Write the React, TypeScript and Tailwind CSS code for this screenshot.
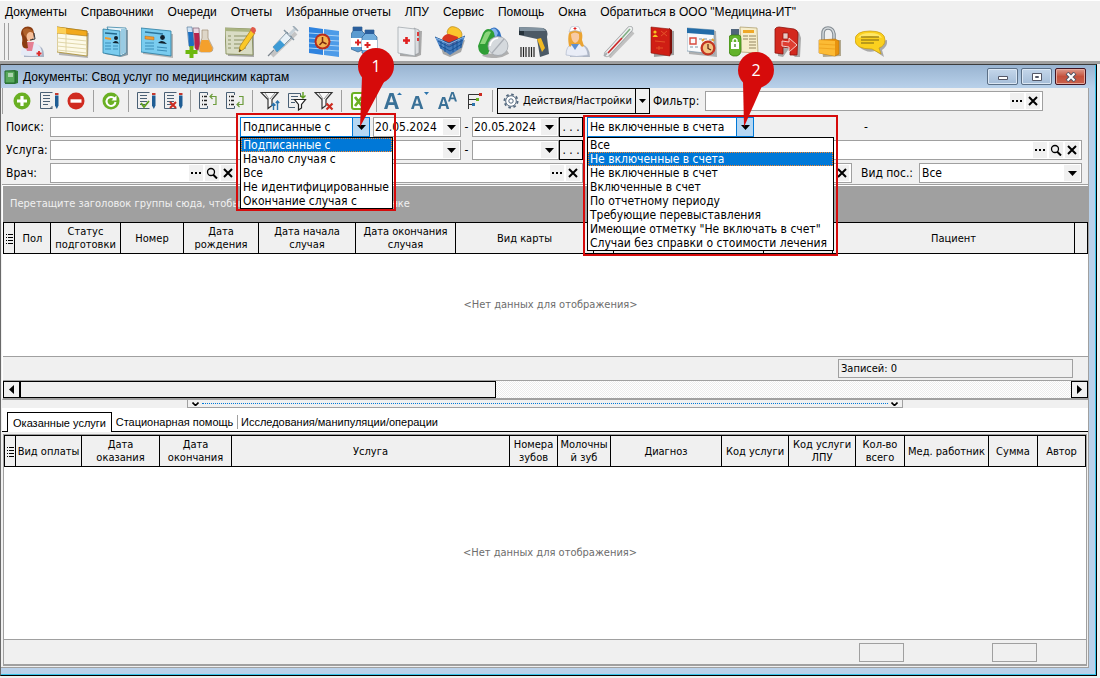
import React from 'react';

const MENU = [
  'Документы',
  'Справочники',
  'Очереди',
  'Отчеты',
  'Избранные отчеты',
  'ЛПУ',
  'Сервис',
  'Помощь',
  'Окна',
  'Обратиться в ООО "Медицина-ИТ"',
];

const DATE_KINDS = ['Подписанные с', 'Начало случая с', 'Все', 'Не идентифицированные', 'Окончание случая с'];

const BILL_KINDS = [
  'Все',
  'Не включенные в счета',
  'Не включенные в счет',
  'Включенные в счет',
  'По отчетному периоду',
  'Требующие перевыставления',
  'Имеющие отметку "Не включать в счет"',
  'Случаи без справки о стоимости лечения',
];

interface Column {
  label: string;
  width: string;
}

const CARD_COLUMNS: Column[] = [
  { label: 'Пол', width: 'w-[36px]' },
  { label: 'Статус подготовки', width: 'w-[70px]' },
  { label: 'Номер', width: 'w-[63px]' },
  { label: 'Дата рождения', width: 'w-[75px]' },
  { label: 'Дата начала случая', width: 'w-[97px]' },
  { label: 'Дата окончания случая', width: 'w-[100px]' },
  { label: 'Вид карты', width: 'w-[138px]' },
  { label: '', width: 'w-[20px]' },
  { label: '', width: 'w-[150px]' },
  { label: '', width: 'w-[69px]' },
  { label: 'Пациент', width: '' },
  { label: '', width: 'w-[13px]' },
];

const SERVICE_COLUMNS: Column[] = [
  { label: 'Вид оплаты', width: 'w-[66px]' },
  { label: 'Дата оказания', width: 'w-[78px]' },
  { label: 'Дата окончания', width: 'w-[72px]' },
  { label: 'Услуга', width: '' },
  { label: 'Номера зубов', width: 'w-[48px]' },
  { label: 'Молочный зуб', width: 'w-[53px]' },
  { label: 'Диагноз', width: 'w-[111px]' },
  { label: 'Код услуги', width: 'w-[67px]' },
  { label: 'Код услуги ЛПУ', width: 'w-[67px]' },
  { label: 'Кол-во всего', width: 'w-[49px]' },
  { label: 'Мед. работник', width: 'w-[84px]' },
  { label: 'Сумма', width: 'w-[49px]' },
  { label: 'Автор', width: 'w-[48px]' },
];

/* ---------- main toolbar art, 32x32 ---------- */

const OperatorArt = () => (
  <>
    <path d="M9 31 Q8 20 13 18 L20 18 Q29 20 29 29 L29 31Z" fill="#a9b3c4" />
    <path d="M6 29 Q6 19 12 17 L20 17 Q27 19 27 29 Q16 31 6 29Z" fill="#e6ebf6" />
    <path d="M9 16 L19 16 L17 25 L12 25Z" fill="#e57f93" />
    <path d="M10 1 Q18 -1 19 7 L18 14 L12 15 L13 22 Q7 24 7 17 Q8 12 6 8 Q6 3 10 1Z" fill="#8b3d12" />
    <path d="M11 6 Q14 3 18 6 L18 12 Q16 16 13 15 Q11 12 11 6Z" fill="#f6c09a" />
    <path d="M8 4 Q12 0 18 5 L18 7 Q13 4 11 11 Q8 9 8 4Z" fill="#b0622a" />
    <path d="M19 7 L20 13 L15 14" fill="none" stroke="#333" strokeWidth="1" />
    <path d="M24 25v5M21.500 27.500h5" stroke="#dd2a2a" strokeWidth="1.800" />
  </>
);

const TableArt = () => (
  <>
    <path d="M3 4 L32 7 L31 32 L2 29Z" fill="#b5b5b5" />
    <path d="M0 1 L30 5 L30 30 L0 26Z" fill="#fdfae8" stroke="#a98b2a" strokeWidth=".8" />
    <path d="M0 1 L30 5 L30 10 L0 7Z" fill="#f2a91c" stroke="#a4700d" strokeWidth=".6" />
    <path d="M0 1 L9 2.200 L9 8 L0 7Z" fill="#fbcf56" />
    <path d="M0 12 L30 15 M0 16 L30 19 M0 20 L30 23 M0 24 L30 27 M9 7.500 V27" stroke="#dcd2a3" strokeWidth=".9" />
  </>
);

const PersonCard = () => (
  <>
    <path d="M4 10 L13 11 L13 14 L4 13Z" fill="#f39a2c" stroke="#a65a10" strokeWidth=".4" />
    <circle cx="21.500" cy="11.500" r="2.400" fill="#10202c" />
    <path d="M17 17 Q21 12.500 26 18Z" fill="#10202c" />
    <path d="M4 17h9M4 20h9M4 23h9M16 21l10 1M16 24l10 1" stroke="#3b8db8" strokeWidth="1" />
    <path d="M4 6 L22 8" stroke="#2b759b" strokeWidth="1.500" />
  </>
);

const CardsArt = () => (
  <>
    <path d="M8 2 L29 4 L29 29 L22 31 L6 28Z" fill="#8b9ca6" />
    <path d="M8 1 L27 2 L27 27 L21 30Z" fill="#e8f4fa" stroke="#3c86a8" strokeWidth=".8" />
    <path d="M23 3v25M25 3v24" stroke="#4ba3cc" strokeWidth="1" />
    <path d="M4 3 L21 5 L21 30 L4 27Z" fill="#7accef" stroke="#2a7ba0" strokeWidth=".8" />
    <path d="M6 11 L12 12 L12 14 L6 13Z" fill="#f39a2c" />
    <path d="M6 17h6M6 20h6M6 23h6M14 20h5M14 23h5" stroke="#3b8db8" />
    <path d="M6 7l12 1" stroke="#23688c" strokeWidth="1.500" />
    <circle cx="17" cy="12" r="2" fill="#10202c" />
    <path d="M13.500 17 Q17 13 20 17.500Z" fill="#10202c" />
  </>
);

const CardArt = () => (
  <>
    <path d="M2 5 L32 8 L32 32 L2 28Z" fill="#b4b4b4" />
    <path d="M0 2 L30 5 L30 30 L0 26Z" fill="#7accef" stroke="#2a7ba0" strokeWidth=".8" />
    <PersonCard />
  </>
);

const TubesArt = () => (
  <>
    <path d="M4 1h5l2 18q-2 4-5 1z" fill="#cfe3f5" stroke="#5d7f9d" strokeWidth=".7" />
    <path d="M5 6h5l1 13q-2 4-5 1z" fill="#1d6fc0" />
    <path d="M10 2h6l1 20q-3 4-5 0z" fill="#ead7e2" stroke="#7a5b70" strokeWidth=".7" />
    <path d="M11 7h5l1 15q-3 4-5 0z" fill="#b8234d" />
    <path d="M19 4h6v8l5 10q0 4-3 4h-9q-3 0-2-4l3-10z" fill="#ded6c8" stroke="#a08d72" strokeWidth=".7" />
    <path d="M18.500 14h7l4 8q0 4-3 4h-8q-2 0-2-4z" fill="#f4a02c" />
    <path d="M6.500 20h4v4h4v4h-4v4h-4v-4h-4v-4h4z" fill="#6cb80e" />
  </>
);

const NoteArt = () => (
  <>
    <path d="M2 3h27v28L3 30z" fill="#a8a8a8" />
    <path d="M0 2 L27 3 L28 29 L1 28Z" fill="#d9dcc4" stroke="#87905c" strokeWidth=".9" />
    <path d="M0 2 L27 3 L27 6 L0 5Z" fill="#a9b381" />
    <path d="M9 10h13M9 14h13M9 18h9M9 22h12M3 10h3M3 14h3M3 18h3M3 22h3" stroke="#8b9265" />
    <path d="M14 26 L15 20 L26 4 L30 7 L19 23Z" fill="#fbc827" stroke="#a97b11" strokeWidth=".7" />
    <path d="M25 4 L27 1 Q31 1 31 5 L29 8Z" fill="#e05a4a" />
    <path d="M14 26 L14.600 23 L16.500 24.500Z" fill="#333" />
  </>
);

const SyringeArt = () => (
  <>
    <path d="M5 30 L29 7" stroke="#c4c4c4" strokeWidth="4" />
    <path d="M1 30 L7 24" stroke="#7b858e" strokeWidth="1.200" />
    <path d="M6 21 L20 6 L25 11 L10 26Z" fill="#e8f1f7" stroke="#6f8797" strokeWidth=".8" />
    <path d="M6 21 L13 14 L18 19 L10 26Z" fill="#3d9bd6" />
    <path d="M17 4 L27 14" stroke="#8496a3" strokeWidth="1.500" />
    <path d="M22 9 L29 2" stroke="#c7d1d8" strokeWidth="3" />
    <path d="M26 0 L31 5" stroke="#9caab4" strokeWidth="1.600" />
  </>
);

const SafeArt = () => (
  <>
    <path d="M0 1 L14 3 L14 29 L0 27Z" fill="#2f83df" />
    <path d="M15 3 L30 5 L30 31 L15 29Z" fill="#4d9be8" />
    <path d="M0 7l14 1M0 12l14 1M0 17l14 1M0 22l14 1M15 9l15 1M15 14l15 1M15 19l15 1M15 24l15 1" stroke="#a9d3f7" />
    <circle cx="13.500" cy="15.500" r="8" fill="#b92c1c" />
    <circle cx="13.500" cy="15.500" r="6" fill="#f4b250" />
    <path d="M13.500 11v5l-3 3M13.500 16l4 2" stroke="#7b2a10" strokeWidth="1.500" fill="none" />
  </>
);

const VialsArt = () => (
  <>
    <path d="M14 24 L26 28 L20 31 L12 28Z" fill="#b3b3b3" />
    <path d="M2 1h9v4l3 3v15l-7 3-7-3V8l2-3z" fill="#5c9bd0" stroke="#2f5f8e" strokeWidth=".7" />
    <path d="M2 1h9v4H2z" fill="#2b5f9c" />
    <path d="M0 12h14v9H0z" fill="#fff" />
    <path d="M14 4h9v4l3 3v16l-8 3-7-3V11l3-3z" fill="#72aedd" stroke="#2f5f8e" strokeWidth=".7" />
    <path d="M14 4h9v4h-9z" fill="#2b5f9c" />
    <path d="M11 14h15v10H11z" fill="#fff" />
    <path d="M16.500 16v6M13.500 19h6M7 13.500v6M4 16.500h6" stroke="#dc2323" strokeWidth="2" />
  </>
);

const HistoryArt = () => (
  <>
    <path d="M7 4 L29 5 L28 29 L23 31 L7 30Z" fill="#a9a9a9" />
    <path d="M21 2 L26 4 L26 27 L22 29Z" fill="#d9dcdf" stroke="#8b8f93" strokeWidth=".6" />
    <path d="M24 6h2v4h-2zM24 12h2v3h-2z" fill="#de3838" />
    <path d="M5 1 L22 3 L22 30 L5 27Z" fill="#eef0f2" stroke="#9aa0a6" strokeWidth=".7" />
    <path d="M13.500 11v7M10 14.500h7" stroke="#e02020" strokeWidth="2.600" />
  </>
);

const BasketArt = () => (
  <>
    <path d="M6 22 L30 14 L26 26 L15 31 L8 28Z" fill="#a6a6a6" />
    <path d="M12 6 Q14 -1 20 1 Q26 3 27 8 Q27 14 22 14 L14 12Z" fill="#fbc52d" stroke="#ac7d12" strokeWidth=".6" />
    <path d="M7 13 Q9 8 14 8 L23 11 L22 18 L13 20Z" fill="#d7361f" />
    <path d="M0 11 L14 17 L30 10 L26 22 L15 29 L5 22Z" fill="#2b6fc1" fillOpacity=".8" />
    <path d="M0 11l14 6 16-7M3 15l11 6 14-7M4 19l11 6 12-7M6 14v9M10 16v10M18 16v10M22 14v10M26 12v10" stroke="#164f92" strokeWidth=".9" fill="none" />
    <path d="M1 12l13 6 15-7" stroke="#9cc8f2" strokeWidth=".8" fill="none" />
  </>
);

const PillsArt = () => (
  <>
    <path d="M6 28 Q20 33 31 26" stroke="#b0b0b0" strokeWidth="4" fill="none" />
    <path d="M12 4 Q18 -2 23 6 L26 16 Q20 24 14 18Z" fill="#2f6fc0" />
    <path d="M14 4 Q18 0 21 7 L19 12Z" fill="#86b5ec" />
    <path d="M1 20 L6 7 Q10 0 16 5 Q19 9 16 15 L11 28 Q2 31 1 20Z" fill="#2f9e35" />
    <path d="M3 18 L8 7 Q11 4 14 6 L8 18Z" fill="#8bd57b" />
    <ellipse cx="21" cy="20" rx="10" ry="9.500" fill="#d5d9dd" stroke="#9a9fa6" strokeWidth=".7" />
    <path d="M15 27 L27 13" stroke="#a9aeb5" strokeWidth="1.200" />
    <path d="M13 20 Q14 13 21 12" stroke="#fff" strokeWidth="1.600" fill="none" />
  </>
);

const ScannerArt = () => (
  <>
    <path d="M0 1 L24 2 Q30 4 28 11 L30 28 L21 31 L18 13 L0 9Z" fill="#4b5965" />
    <path d="M0 1 L24 2 L27 5 L1 5Z" fill="#8293a0" />
    <path d="M0 5 h5 v4 h-5z" fill="#26323b" />
    <path d="M18 13 L22 12 L26 22 L23 26Z" fill="#f1b922" />
    <path d="M2 21v10M4.500 21v10M7 21v10M10 21v10M12.500 21v10M15 21v10" stroke="#222" strokeWidth="1.200" />
  </>
);

const NurseArt = () => (
  <>
    <path d="M9 31 Q8 20 14 18 L20 18 Q29 20 29 31Z" fill="#aeb6c4" />
    <path d="M5 29 Q5 20 11 18 L19 18 Q26 20 27 29 Q15 32 5 29Z" fill="#e9edf7" stroke="#a7b1c6" strokeWidth=".6" />
    <path d="M8 20 Q5 4 14 2 Q23 3 21 14 L23 20 Q20 22 19 18 L11 18 Q10 22 8 20Z" fill="#eba432" />
    <path d="M10 8 Q14 5 18 8 Q19 16 14 17 Q10 15 10 8Z" fill="#f8cba5" />
    <path d="M8 6 L10 1 Q14 -1 18 1 L20 6 Q14 3 8 6Z" fill="#fff" stroke="#a9b4c8" strokeWidth=".6" />
    <path d="M14 1v3M12.500 2.500h3" stroke="#dd2020" />
    <path d="M10 18 L14 24 L18 18Z" fill="#5e8fd0" />
  </>
);

const ThermometerArt = () => (
  <>
    <path d="M6 31 L30 6" stroke="#c0c0c0" strokeWidth="4" />
    <path d="M4 28 L27 3" stroke="#9da1a3" strokeWidth="6" strokeLinecap="round" />
    <path d="M4 28 L27 3" stroke="#eef0f0" strokeWidth="4.600" strokeLinecap="round" />
    <path d="M5 27 L19 12" stroke="#cc2a2a" strokeWidth="1.800" />
    <path d="M19 12 L27 3" stroke="#7fae83" strokeWidth="1.600" />
    <path d="M1 30 L4 27" stroke="#a8adb0" strokeWidth="2" />
  </>
);

const PassportArt = () => (
  <>
    <path d="M8 3 L29 5 L29 29 L9 31Z" fill="#9f9f9f" />
    <path d="M24 2 L27 4 L27 27 L24 30Z" fill="#7a0f09" />
    <path d="M6 1 L25 3 L25 30 L6 27Z" fill="#cf1e14" stroke="#8a130b" strokeWidth=".6" />
    <circle cx="10" cy="6" r="1.600" fill="#f5c522" />
    <path d="M7.500 11 Q10 6 13 11Z" fill="#f5c522" />
    <path d="M16 5l6 5M22 5l-6 5M10 15l10 1M14 20v4M11 22h7" stroke="#e5582a" strokeWidth=".9" />
  </>
);

const ScheduleArt = () => (
  <>
    <path d="M2 3 L29 5 L30 31 L2 28Z" fill="#b0b0b0" />
    <path d="M0 2 L27 4 L27 28 L0 25Z" fill="#f8fafc" stroke="#7895aa" strokeWidth=".7" />
    <path d="M0 2 L27 4 L27 9 L0 7Z" fill="#236ca8" />
    <path d="M3 12h6v6H3z" fill="none" stroke="#d84a3e" strokeWidth="1.400" />
    <path d="M12 13h3M17 13h3M22 14h3M3 21h3M8 21h3" stroke="#b9c6cf" strokeWidth="2" />
    <circle cx="21" cy="22" r="7.500" fill="#c33522" />
    <circle cx="21" cy="22" r="5.200" fill="#f3c483" />
    <path d="M21 18v4.500l3 1.500" stroke="#5d2412" strokeWidth="1.200" fill="none" />
    <path d="M15 15l2-2M27 15l-2-2" stroke="#e2a02a" strokeWidth="2" />
  </>
);

const KeyDocArt = () => (
  <>
    <path d="M11 1 L28 2 L29 27 L12 26Z" fill="#f6edcb" stroke="#a69763" strokeWidth=".7" />
    <path d="M14 4h11v3H14z" fill="#efa827" />
    <path d="M14 10h5M14 13h5M20 10h7M20 13h7M20 16h7M20 19h7M20 22h7" stroke="#938661" strokeWidth="1.200" />
    <path d="M2 3h8v7H2z" fill="#51667b" />
    <path d="M0 12 Q0 9 3 9h7q2 0 2 4v11q0 5-4 6H4q-4-1-4-5z" fill="#62b32a" stroke="#367a10" strokeWidth=".7" />
    <path d="M2 16h8v7H2z" fill="#fff" />
    <path d="M4 16v-2q2-3 4 0v2" stroke="#fff" strokeWidth="1.400" fill="none" />
    <path d="M6 18v3" stroke="#367a10" strokeWidth="1.200" />
  </>
);

const AccountArt = () => (
  <>
    <path d="M6 4 L28 6 L30 12 L29 31 L24 31 L17 24 L12 31 L7 30Z" fill="#aaa" />
    <path d="M4 3 Q5 1 8 1 L23 3 Q27 4 27 8 L26 29 L19 29 L19 22 L12 21 L12 28 L4 27Z" fill="#d3291e" stroke="#8d130c" strokeWidth=".8" />
    <path d="M12 7 L17 7 L17 13 L12 13Z" fill="#e8c9c5" stroke="#8d130c" strokeWidth=".7" />
    <path d="M11 15 L18 16 L18 12 L26 19 L18 26 L18 21 L11 20Z" fill="#df3d31" stroke="#f6dedb" strokeWidth=".9" />
  </>
);

const LockArt = () => (
  <>
    <path d="M8 14h20v16L10 31z" fill="#b1a88f" />
    <path d="M10 15V8Q10 2 15 2t6 6v6" fill="none" stroke="#838b92" strokeWidth="3.600" />
    <path d="M10 15V8Q10 2 15 2t6 6v6" fill="none" stroke="#d5dadd" strokeWidth="1.400" />
    <path d="M6 14 L22 13 L26 15 L26 28 L22 30 L6 27Z" fill="#e8930f" stroke="#b47109" strokeWidth=".6" />
    <path d="M6 14 L22 15 L22 30 L6 27Z" fill="#fcbb35" />
    <path d="M6 18l16 1M6 22l16 1" stroke="#f0a620" />
  </>
);

const ChatArt = () => (
  <>
    <path d="M3 20 Q12 28 20 25 L29 31 L27 24 Q33 20 32 14Z" fill="#a9a9a9" />
    <path d="M15 5 Q30 5 30 14 Q30 20 24 22 L26 28 L17 23 Q0 23 0 14 Q0 5 15 5Z" fill="#fbd01f" stroke="#c79b0d" strokeWidth=".7" />
    <path d="M3 12 Q5 7 15 7 Q25 7 27 12 Q16 8 3 12Z" fill="#ffe765" />
    <path d="M6 11h18M6 14h18M6 17h13" stroke="#7a6416" strokeWidth="1.200" />
  </>
);

const MAIN_TOOLS: { title: string; Art: React.FC }[] = [
  { title: 'Регистратура', Art: OperatorArt },
  { title: 'Расписание', Art: TableArt },
  { title: 'Картотека', Art: CardsArt },
  { title: 'Карта пациента', Art: CardArt },
  { title: 'Лаборатория', Art: TubesArt },
  { title: 'Записи', Art: NoteArt },
  { title: 'Прививки', Art: SyringeArt },
  { title: 'Архив', Art: SafeArt },
  { title: 'Медикаменты', Art: VialsArt },
  { title: 'История болезни', Art: HistoryArt },
  { title: 'Аптека', Art: BasketArt },
  { title: 'Лекарства', Art: PillsArt },
  { title: 'Сканер', Art: ScannerArt },
  { title: 'Медсестра', Art: NurseArt },
  { title: 'Температура', Art: ThermometerArt },
  { title: 'Паспорт', Art: PassportArt },
  { title: 'График', Art: ScheduleArt },
  { title: 'Подпись', Art: KeyDocArt },
  { title: 'Выход', Art: AccountArt },
  { title: 'Блокировка', Art: LockArt },
  { title: 'Сообщения', Art: ChatArt },
];

/* ---------- document toolbar art, 20x20 ---------- */

const AddArt = () => (
  <>
    <circle cx="10" cy="10" r="8.500" fill="#6ab023" />
    <path d="M10 5v10M5 10h10" stroke="#fff" strokeWidth="3.200" />
  </>
);

const DeleteArt = () => (
  <>
    <circle cx="10" cy="10" r="8.500" fill="#d02b20" />
    <path d="M4.500 10h11" stroke="#fff" strokeWidth="3.400" />
  </>
);

const RefreshArt = () => (
  <>
    <circle cx="10" cy="10" r="8.500" fill="#6ab023" />
    <path d="M13.500 7.500A4.500 4.500 0 1 0 14.500 11" fill="none" stroke="#fff" strokeWidth="2" />
    <path d="M15.500 4.500v5h-5z" fill="#fff" />
  </>
);

const PageWithPen = () => (
  <>
    <path d="M13.500 17.500h-12v-16h12" fill="none" stroke="#4a6075" />
    <path d="M4 4.500h7M4 7.500h7M4 10.500h7M4 13.500h5" stroke="#4a6075" />
    <path d="M16 4.500h3.500v10L17.800 18 16 14.500z" fill="#1f5d94" />
    <path d="M16 2h3.500v2H16z" fill="#c43a2f" />
  </>
);

const EditArt = () => (
  <>
    <PageWithPen />
    <path d="M11 17h2v-2" stroke="#4a6075" fill="none" />
  </>
);

const CheckDocArt = () => (
  <>
    <PageWithPen />
    <path d="M5 12l3 4 5-6" stroke="#5d9e1f" strokeWidth="1.800" fill="none" />
  </>
);

const CrossDocArt = () => (
  <>
    <PageWithPen />
    <path d="M7 11l6 6M13 11l-6 6" stroke="#cc2b20" strokeWidth="2" />
  </>
);

const ListPage = () => (
  <>
    <path d="M9.500 4V1.500h-8v16h8V15" fill="none" stroke="#4a6075" />
    <path d="M4 5.500h1M6 5.500h3M4 9.500h1M6 9.500h3M4 13.500h1M6 13.500h3" stroke="#222" strokeWidth="1.600" />
  </>
);

const ExpandArt = () => (
  <>
    <ListPage />
    <path d="M12 5.500h6v8h-3M14.500 3L12 5.500L14.500 8" fill="none" stroke="#6c9c3c" strokeWidth="1.200" />
  </>
);

const CollapseArt = () => (
  <>
    <ListPage />
    <path d="M14 5.500h4v8h-6M14.500 11L12 13.500l2.500 2.500" fill="none" stroke="#6c9c3c" strokeWidth="1.200" />
  </>
);

const FilterArt = () => (
  <>
    <path d="M1 1.500h17l-6 7v6l-4 3v-9z" fill="#f8f8f8" stroke="#333" strokeWidth="1.200" />
    <path d="M5 2l4 6M15 2l-5 6" stroke="#777" strokeWidth=".8" />
    <path d="M13.500 19v-6M11.500 14.500l2-2 2 2M17.500 19v-9M15.800 12l1.700-2 1.700 2" stroke="#2c74ac" strokeWidth="1.400" fill="none" />
  </>
);

const FilterDocArt = () => (
  <>
    <path d="M8 16.500H1.500v-14h12V6" fill="none" stroke="#4a6075" />
    <path d="M4 5.500h7M4 8.500h4M4 11.500h4" stroke="#4a6075" />
    <path d="M7.500 8.500h11l-4 5v3.500l-3 2v-5.500z" fill="#fff" stroke="#222" strokeWidth="1.200" />
    <path d="M16 1v6M13.500 4.500L16 7l2.500-2.500" stroke="#5d9e1f" strokeWidth="1.400" fill="none" />
  </>
);

const FilterClearArt = () => (
  <>
    <path d="M1 1.500h17l-6 7v6l-4 3v-9z" fill="#f8f8f8" stroke="#333" strokeWidth="1.200" />
    <path d="M5 2l4 6M15 2l-5 6" stroke="#777" strokeWidth=".8" />
    <path d="M12.500 12.500l6 6M18.500 12.500l-6 6" stroke="#cc2b20" strokeWidth="2.200" />
  </>
);

const ExcelArt = () => (
  <>
    <rect x="3" y="2" width="15" height="16" rx="2" fill="#fff" stroke="#6ab023" strokeWidth="2" />
    <path d="M6 6l7 9M13 6l-7 9" stroke="#6ab023" strokeWidth="2.800" />
  </>
);

const LetterA = () => (
  <path d="M0 16 5.500 0h4l5.500 16h-3.500l-1.200-4H4.500L3.300 16zM5.300 9.300h4.200L7.400 2.800z" fill="#3a7197" fillRule="evenodd" />
);

const FontUpArt = () => (
  <>
    <g transform="translate(0 2)"><LetterA /></g>
    <path d="M13 4L15.500 1.500L18 4z" fill="#2c74ac" />
  </>
);

const FontDownArt = () => (
  <>
    <g transform="translate(0 5) scale(.82)"><LetterA /></g>
    <path d="M13 1h5L15.500 4z" fill="#2c74ac" />
  </>
);

const FontBothArt = () => (
  <>
    <g transform="translate(0 6) scale(.75)"><LetterA /></g>
    <g transform="translate(10 1) scale(.6)"><LetterA /></g>
  </>
);

const TreeArt = () => (
  <>
    <path d="M3.500 18V3.500H14M3.500 8.500H11M3.500 13.500H8" stroke="#333" fill="none" />
    <path d="M14 2h3v3h-3z" fill="#cc2b20" />
    <path d="M11 7h3v3h-3z" fill="#6ab023" />
    <path d="M7 12h3v3H7z" fill="#2c74ac" />
  </>
);

const DOC_TOOLS: { title: string; Art: React.FC }[][] = [
  [
    { title: 'Добавить', Art: AddArt },
    { title: 'Изменить', Art: EditArt },
    { title: 'Удалить', Art: DeleteArt },
  ],
  [{ title: 'Обновить', Art: RefreshArt }],
  [
    { title: 'Подписать', Art: CheckDocArt },
    { title: 'Снять подпись', Art: CrossDocArt },
  ],
  [
    { title: 'Развернуть', Art: ExpandArt },
    { title: 'Свернуть', Art: CollapseArt },
  ],
  [
    { title: 'Фильтр', Art: FilterArt },
    { title: 'Фильтр документов', Art: FilterDocArt },
    { title: 'Сбросить фильтр', Art: FilterClearArt },
  ],
  [{ title: 'Экспорт', Art: ExcelArt }],
  [
    { title: 'Увеличить шрифт', Art: FontUpArt },
    { title: 'Уменьшить шрифт', Art: FontDownArt },
    { title: 'Обычный шрифт', Art: FontBothArt },
    { title: 'Дерево', Art: TreeArt },
  ],
];

/* ---------- controls ---------- */

const Caret = () => (
  <svg className="w-[9px] h-[5px]" viewBox="0 0 9 5">
    <path d="M0 0h9L4.500 5z" fill="#000" />
  </svg>
);

type Glyph = 'dots' | 'search' | 'clear';

const GLYPH_LABELS: Record<Glyph, string> = { dots: 'Выбрать', search: 'Найти', clear: 'Очистить' };

const GlyphButton: React.FC<{ kind: Glyph }> = ({ kind }) => (
  <button type="button" aria-label={GLYPH_LABELS[kind]} className="w-[14px] h-4 shrink-0 bg-[#f0f0f0] flex items-center justify-center">
    <svg className="w-3 h-3" viewBox="0 0 12 12" fill="none" stroke="#000">
      {kind === 'dots' && <path d="M1 6h2M5 6h2M9 6h2" strokeWidth="2" />}
      {kind === 'search' && (
        <>
          <circle cx="5" cy="5" r="3.500" strokeWidth="1.300" />
          <path d="M7 7.500l4 4" strokeWidth="2" />
        </>
      )}
      {kind === 'clear' && <path d="M2 2l8 8M10 2l-8 8" strokeWidth="2" />}
    </svg>
  </button>
);

interface FieldProps {
  id: string;
  label?: string;
  className: string;
  glyphs?: Glyph[];
}

const Field: React.FC<FieldProps> = ({ id, label, className, glyphs = [] }) => (
  <div className={`h-5 bg-white border border-[#a0a0a0] flex items-center gap-[2px] pr-[2px] ${className}`}>
    <input id={id} type="text" aria-label={label} className="flex-1 min-w-0 h-full px-1 outline-none bg-transparent" />
    {glyphs.map(g => <GlyphButton key={g} kind={g} />)}
  </div>
);

const DateField: React.FC<{ label: string; value?: string; className: string }> = ({ label, value = '', className }) => (
  <div className={`h-5 shrink-0 bg-white border border-[#a0a0a0] flex items-center pr-px ${className}`}>
    <input type="text" aria-label={label} defaultValue={value} className="flex-1 min-w-0 h-full px-px outline-none bg-transparent" />
    <button type="button" aria-label="Календарь" className="w-4 h-4 shrink-0 bg-[#f0f0f0] flex items-center justify-center">
      <Caret />
    </button>
  </div>
);

const PeriodButton = () => (
  <button type="button" aria-label="Период" className="w-6 h-5 shrink-0 border border-black bg-[#f0f0f0] leading-3">
    . . .
  </button>
);

interface OpenComboProps {
  label: string;
  options: string[];
  selected: string;
  className: string;
  listClassName: string;
  frameClassName: string;
  children: React.ReactNode;
}

// Combo box drawn with its list open, a red frame and a numbered pin
const OpenCombo: React.FC<OpenComboProps> = ({ label, options, selected, className, listClassName, frameClassName, children }) => (
  <div className={`relative h-5 shrink-0 ${className}`}>
    <select
      aria-label={label}
      defaultValue={selected}
      className="appearance-none w-full h-full pl-[2px] pr-[18px] bg-white border border-[#0078d7] outline-none"
    >
      {options.map(o => <option key={o}>{o}</option>)}
    </select>
    <span className="absolute right-0 top-0 w-[18px] h-full border border-[#0078d7] bg-[#b5d7f3] flex items-center justify-center pointer-events-none">
      <Caret />
    </span>
    <ul role="listbox" className={`absolute z-20 left-0 top-full bg-white border border-black ${listClassName}`}>
      {options.map(o => (
        <li
          key={o}
          role="option"
          aria-selected={o === selected}
          className={`h-[14px] leading-[14px] px-[2px] whitespace-nowrap ${
            o === selected ? 'bg-[#0078d7] text-white outline-1 outline-dotted -outline-offset-1 outline-[#ff8728]' : ''
          }`}
        >
          {o}
        </li>
      ))}
    </ul>
    <div className={`absolute z-30 border-2 border-[#d60b0b] pointer-events-none ${frameClassName}`} />
    {children}
  </div>
);

const GridHeader: React.FC<{ columns: Column[] }> = ({ columns }) => (
  <table className="table-fixed border-collapse w-full bg-[#f0f0f0]">
    <thead>
      <tr className="h-[31px]">
        <th className="w-[11px] border border-black p-0">
          <svg className="w-[7px] h-[11px] mx-auto" viewBox="0 0 7 11" aria-label="Столбцы">
            <path d="M2 1.500h5M2 4.500h5M2 7.500h5M2 10.500h5M0 1.500h1M0 4.500h1M0 7.500h1M0 10.500h1" stroke="#000" />
          </svg>
        </th>
        {columns.map((c, i) => (
          <th key={i} className={`border border-black p-0 text-[11px] leading-[13px] font-normal break-words ${c.width}`}>
            {c.label}
          </th>
        ))}
      </tr>
    </thead>
  </table>
);

const EmptyGrid = () => <p className="mr-[-10px] text-[11px] text-[#6d6d6d]">&lt;Нет данных для отображения&gt;</p>;

const App: React.FC = () => {
  return (
    <div className="min-h-screen flex flex-col bg-[#f0f0f0] text-black text-[12px] leading-4 font-['DejaVu_Sans_Condensed','DejaVu_Sans',sans-serif] overflow-hidden">
      <nav className="h-[22px] pl-[5px] flex items-center gap-[14px] border-t border-white font-['Liberation_Sans',sans-serif]">
        {MENU.map(item => (
          <button key={item} type="button" className="whitespace-nowrap">{item}</button>
        ))}
      </nav>

      <div className="h-[39px] pl-1 flex items-center gap-2.5">
        <span className="w-[5px] h-[37px] -mr-[4px] border-x border-[#a0a0a0]" />
        {MAIN_TOOLS.map(({ title, Art }) => (
          <button key={title} type="button" aria-label={title} className="w-8 h-8 shrink-0">
            <svg className="w-8 h-8" viewBox="0 0 32 32"><Art /></svg>
          </button>
        ))}
      </div>
      <div className="h-[3px] bg-[#a0a0a0]" />

      {/* MDI window */}
      <main className="flex-1 flex flex-col mr-[3px] mb-[3px] border-l border-t border-l-[#696969] border-t-[#3c3c3c] border-r border-b border-r-black border-b-black">
        <div className="flex-1 flex flex-col border-r border-b border-[#37c3e8] bg-[#b9d1ea]">
          <header className="h-[23px] pl-[3px] pr-[9px] flex items-center bg-linear-to-b from-[#99b4d1] to-[#b9d1ea]">
            <svg className="w-4 h-4 mr-[3px]" viewBox="0 0 16 16">
              <path d="M1 2l10-1 3 1v12l-3 1H1z" fill="#2f7d38" />
              <path d="M1 2h10v12H1z" fill="#58a95c" stroke="#22682c" />
              <path d="M4 5h5M4 7h5" stroke="#fff" strokeWidth="1.200" />
            </svg>
            <h1 className="flex-1 font-['Liberation_Sans',sans-serif]">Документы: Свод услуг по медицинским картам</h1>
            <div className="flex gap-[3px]">
              <button type="button" aria-label="Свернуть окно" className="w-[31px] h-[17px] rounded-[2px] border border-[#5b6f86] bg-linear-to-b from-[#c4d6ea] to-[#a5bdd8] flex items-center justify-center shadow-[inset_0_0_0_1px_#dbe7f4]">
                <svg className="w-3 h-2" viewBox="0 0 12 8"><path d="M1.500 3.500h9v3h-9z" fill="#fff" stroke="#535666" /></svg>
              </button>
              <button type="button" aria-label="Развернуть окно" className="w-[31px] h-[17px] rounded-[2px] border border-[#5b6f86] bg-linear-to-b from-[#c4d6ea] to-[#a5bdd8] flex items-center justify-center shadow-[inset_0_0_0_1px_#dbe7f4]">
                <svg className="w-3 h-2.5" viewBox="0 0 12 10"><path d="M1.500 1.500h9v7h-9zM4.500 4.500h3v1h-3z" fill="#fff" stroke="#535666" /></svg>
              </button>
              <button type="button" aria-label="Закрыть окно" className="w-[31px] h-[17px] rounded-[2px] border border-[#431422] bg-linear-to-b from-[#dc9a8c] via-[#c4503c] to-[#c9604c] flex items-center justify-center shadow-[inset_0_0_0_1px_#e5a99c]">
                <svg className="w-3 h-2.5" viewBox="0 0 12 10">
                  <path d="M2 1l8 8M10 1l-8 8" stroke="#535666" strokeWidth="4" />
                  <path d="M2.500 1.500l7 7M9.500 1.500l-7 7" stroke="#fff" strokeWidth="2" />
                </svg>
              </button>
            </div>
          </header>

          <div className="flex-1 flex flex-col mr-[6px] mb-[6px] pl-px bg-[#f0f0f0] border-r border-b border-[#a0a0a0]">
            {/* document toolbar */}
            <div className="h-[26px] pl-[5px] pr-[45px] flex items-center border-l border-[#a0a0a0]">
              {DOC_TOOLS.map((group, i) => (
                <React.Fragment key={i}>
                  {group.map(({ title, Art }) => (
                    <button key={title} type="button" aria-label={title} className="w-[27px] h-6 shrink-0 flex items-center justify-center">
                      <svg className="w-5 h-5" viewBox="0 0 20 20"><Art /></svg>
                    </button>
                  ))}
                  <span className="w-2 shrink-0 flex justify-center"><span className="w-px h-[22px] bg-[#a0a0a0]" /></span>
                </React.Fragment>
              ))}
              <button type="button" className="w-[139px] h-[26px] ml-px shrink-0 border border-black flex items-center gap-1 pl-[5px] text-[11px] whitespace-nowrap">
                <svg className="w-4 h-4 shrink-0" viewBox="0 0 16 16" fill="none" stroke="#52677d">
                  <circle cx="8" cy="8" r="6.600" strokeWidth="1.800" strokeDasharray="2.600 2.580" />
                  <circle cx="8" cy="8" r="5.300" fill="#fff" />
                  <circle cx="8" cy="8" r="2.200" />
                </svg>
                <span><u>Д</u>ействия/Настройки</span>
              </button>
              <button type="button" aria-label="Меню действий" className="w-[15px] h-[26px] -ml-px shrink-0 border border-black flex items-center justify-center">
                <svg className="w-[7px] h-1" viewBox="0 0 7 4"><path d="M0 0h7L3.500 4z" fill="#000" /></svg>
              </button>
              <label htmlFor="filter" className="w-[55px] shrink-0 pl-[3px]">Фильтр:</label>
              <Field id="filter" className="flex-1" glyphs={['dots', 'clear']} />
            </div>

            {/* search panel */}
            <div className="pl-1 pr-[6px] pt-[3px] pb-px flex flex-col gap-[3px] border-b border-[#a0a0a0]">
              <div className="flex items-center">
                <label htmlFor="search" className="w-11 shrink-0">Поиск:</label>
                <Field id="search" className="w-[188px] shrink-0 mr-[2px]" />
                <OpenCombo
                  label="Тип даты"
                  options={DATE_KINDS}
                  selected="Подписанные с"
                  className="w-[130px] mr-[3px]"
                  listClassName="w-[153px]"
                  frameClassName="-left-[4px] -top-[4px] w-[160px] h-[98px]"
                >
                  <div className="absolute z-40 left-[117px] -top-[71px] w-[38px] h-[82px] pointer-events-none">
                    <svg className="absolute inset-0 w-full h-full" viewBox="0 0 38 82">
                      <circle cx="19" cy="20" r="18" fill="#d60b0b" />
                      <path d="M5 31 L3 81 L27 36 L19 20Z" fill="#d60b0b" />
                    </svg>
                    <span className="absolute inset-x-0 top-0 h-10 flex items-center justify-center text-white text-[16px] font-['Open_Sans',sans-serif]">1</span>
                  </div>
                </OpenCombo>
                <DateField label="Дата с" value="20.05.2024" className="w-[88px]" />
                <span className="w-[11px] shrink-0 text-center">-</span>
                <DateField label="Дата по" value="20.05.2024" className="w-[87px]" />
                <PeriodButton />
                <OpenCombo
                  label="Включение в счет"
                  options={BILL_KINDS}
                  selected="Не включенные в счета"
                  className="w-[167px] ml-1"
                  listClassName="w-[247px]"
                  frameClassName="-left-[4px] -top-[2px] w-[255px] h-[141px]"
                >
                  <div className="absolute z-40 left-[150px] -top-[67px] w-[38px] h-[78px] pointer-events-none">
                    <svg className="absolute inset-0 w-full h-full" viewBox="0 0 38 78">
                      <circle cx="19" cy="20" r="18" fill="#d60b0b" />
                      <path d="M6 31 L7 77 L25 36 L19 20Z" fill="#d60b0b" />
                    </svg>
                    <span className="absolute inset-x-0 top-0 h-10 flex items-center justify-center text-white text-[16px] font-['Open_Sans',sans-serif]">2</span>
                  </div>
                </OpenCombo>
                <span className="ml-[110px]">-</span>
              </div>

              <div className="flex items-center">
                <label htmlFor="service" className="w-11 shrink-0">Услуга:</label>
                <Field id="service" className="w-[320px] shrink-0 mr-[3px]" />
                <DateField label="Услуга с" className="w-[88px]" />
                <span className="w-[11px] shrink-0 text-center">-</span>
                <DateField label="Услуга по" className="w-[87px]" />
                <PeriodButton />
                <Field id="division" label="Подразделение" className="flex-1 ml-1" glyphs={['dots', 'search', 'clear']} />
              </div>

              <div className="flex items-center">
                <label htmlFor="doctor" className="w-11 shrink-0">Врач:</label>
                <Field id="doctor" className="w-[188px] shrink-0 mr-[2px]" glyphs={['dots', 'search', 'clear']} />
                <Field id="diagnosis" label="Диагноз" className="w-[343px] shrink-0 mr-1" glyphs={['dots', 'clear']} />
                <Field id="payer" label="Плательщик" className="w-[265px] shrink-0 mr-[9px]" glyphs={['clear']} />
                <label htmlFor="visit" className="w-[58px] shrink-0 whitespace-nowrap">Вид пос.:</label>
                <div className="relative flex-1 h-5">
                  <select id="visit" defaultValue="Все" className="appearance-none w-full h-full pl-[2px] bg-white border border-[#a0a0a0] outline-none">
                    <option>Все</option>
                  </select>
                  <span className="absolute right-[2px] top-[2px] w-4 h-4 bg-[#f0f0f0] flex items-center justify-center pointer-events-none">
                    <Caret />
                  </span>
                </div>
              </div>
            </div>

            {/* cards grid */}
            <section className="flex flex-col border-l border-t border-white border-b-2 border-b-[#a0a0a0]">
              <div className="h-9 pl-[7px] flex items-center bg-[#a0a0a0] text-[11px] text-[#f0f0f0] whitespace-nowrap">
                Перетащите заголовок группы сюда, чтобы сгруппировать по этой колонке
              </div>
              <GridHeader columns={CARD_COLUMNS} />
              <div className="h-[102px] bg-white flex items-center justify-center">
                <EmptyGrid />
              </div>
              <div className="h-[25px] pr-[15px] flex items-center justify-end border-y border-[#a0a0a0]">
                <div className="w-[235px] h-[19px] pl-[2px] flex items-center border border-[#a0a0a0] text-[11px]">Записей: 0</div>
              </div>
              <div className="h-[17px] flex bg-[repeating-conic-gradient(#fff_0_25%,#ececec_0_50%)] bg-size-[2px_2px]">
                <button type="button" aria-label="Влево" className="w-[17px] border border-black bg-[#f0f0f0] flex items-center justify-center">
                  <svg className="w-[5px] h-[9px]" viewBox="0 0 5 9"><path d="M5 0v9L0 4.500z" /></svg>
                </button>
                <div className="w-[44%] -ml-px mr-auto border border-black border-l-2 bg-[#f0f0f0]" />
                <button type="button" aria-label="Вправо" className="w-[17px] border border-black bg-[#f0f0f0] flex items-center justify-center">
                  <svg className="w-[5px] h-[9px]" viewBox="0 0 5 9"><path d="M0 0v9l5-4.500z" /></svg>
                </button>
              </div>
            </section>

            {/* splitter */}
            <div className="h-2 w-[66%] mx-auto px-1 flex items-center gap-[3px] border-x border-b border-[#a0a0a0]">
              <svg className="w-[7px] h-1" viewBox="0 0 7 4" fill="none" stroke="#000" strokeWidth="1.600"><path d="M.5 .5l3 3 3-3" /></svg>
              <span className="flex-1 border-t border-dotted border-[#0078d7]" />
              <svg className="w-[7px] h-1" viewBox="0 0 7 4" fill="none" stroke="#000" strokeWidth="1.600"><path d="M.5 .5l3 3 3-3" /></svg>
            </div>

            {/* services */}
            <div role="tablist" className="h-6 shrink-0 flex items-end bg-white text-[11px] font-['Liberation_Sans',sans-serif]">
              <span className="w-[5px] border-b border-black" />
              <button type="button" role="tab" aria-selected="true" className="w-[105px] h-5 border border-b-0 border-black whitespace-nowrap">Оказанные услуги</button>
              <button type="button" role="tab" aria-selected="false" className="w-[125px] h-5 border-b border-black whitespace-nowrap">
                Стационарная помощь
              </button>
              <span className="h-5 flex items-center border-b border-black"><span className="w-px h-[14px] bg-[#a0a0a0]" /></span>
              <button type="button" role="tab" aria-selected="false" className="flex-1 h-5 pl-[3px] text-left border-b border-black whitespace-nowrap">
                Исследования/манипуляции/операции
              </button>
            </div>

            <section className="flex-1 flex flex-col mt-[2px] ml-px mr-px mb-px border border-[#a0a0a0] border-b-2">
              <GridHeader columns={SERVICE_COLUMNS} />
              <div className="flex-1 min-h-[172px] bg-white flex items-center justify-center">
                <EmptyGrid />
              </div>
              <div className="h-[25px] pr-[49px] flex items-center justify-end gap-[88px] border-t border-[#a0a0a0]">
                <div className="w-[45px] h-[19px] border border-[#a0a0a0]" />
                <div className="w-[45px] h-[19px] border border-[#a0a0a0]" />
              </div>
            </section>
          </div>
        </div>
      </main>
    </div>
  );
};

export default App;
